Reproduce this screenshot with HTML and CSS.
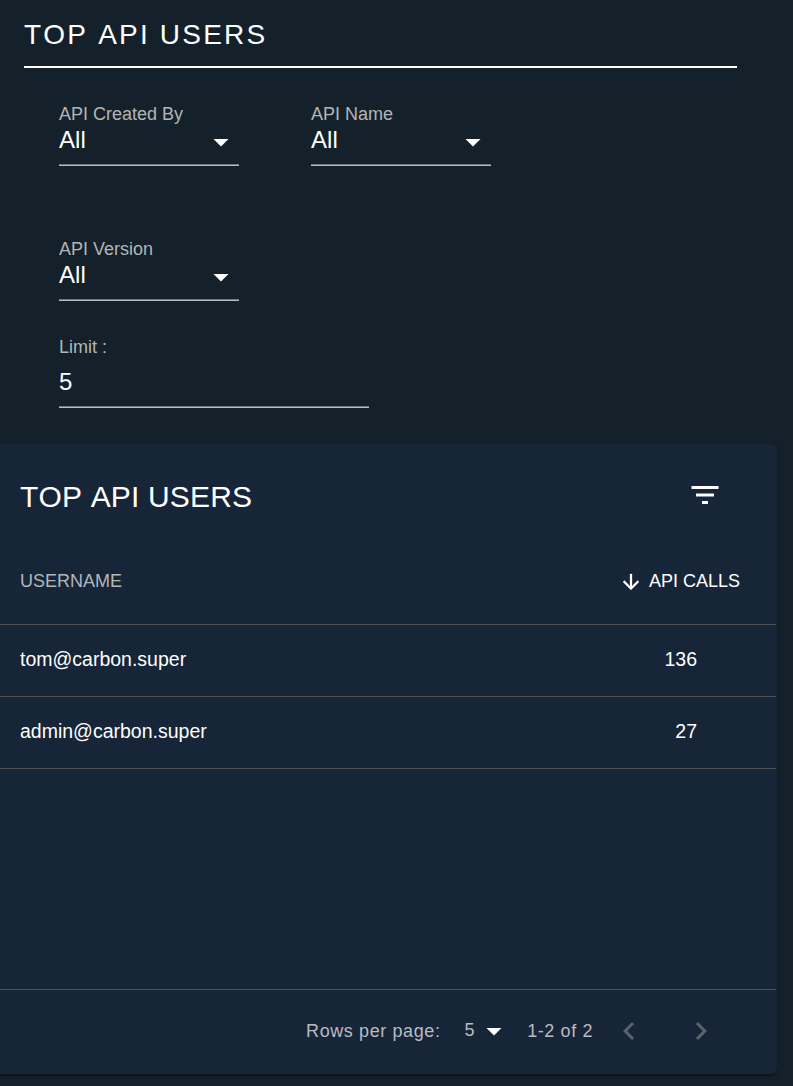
FILE: index.html
```html
<!DOCTYPE html>
<html lang="en">
<head>
<meta charset="utf-8">
<title>Top API Users</title>
<link rel="stylesheet" href="styles.css">
</head>
<body>
<header class="heading"><h1>TOP API USERS</h1></header>
<form class="filters">
  <div class="field select">
    <label>API Created By</label>
    <div class="control"><span>All</span><svg class="caret" viewBox="0 0 24 24"><path d="M7 10l5 5 5-5z"/></svg></div>
  </div>
  <div class="field select">
    <label>API Name</label>
    <div class="control"><span>All</span><svg class="caret" viewBox="0 0 24 24"><path d="M7 10l5 5 5-5z"/></svg></div>
  </div>
  <div class="field select">
    <label>API Version</label>
    <div class="control"><span>All</span><svg class="caret" viewBox="0 0 24 24"><path d="M7 10l5 5 5-5z"/></svg></div>
  </div>
  <div class="field limit">
    <label>Limit :</label>
    <div class="control"><span>5</span></div>
  </div>
</form>
<section class="card">
  <div class="toolbar">
    <h2>TOP API USERS</h2>
    <svg class="icon" viewBox="0 0 24 24"><path d="M10 18h4v-2h-4v2zM3 6v2h18V6H3zm3 7h12v-2H6v2z"/></svg>
  </div>
  <div class="row head">
    <span class="muted">USERNAME</span>
    <span class="sort"><svg viewBox="0 0 24 24"><path d="M20 12l-1.41-1.41L13 16.17V4h-2v12.17l-5.58-5.59L4 12l8 8 8-8z"/></svg>API CALLS</span>
  </div>
  <div class="row"><span>tom@carbon.super</span><span class="num">136</span></div>
  <div class="row"><span>admin@carbon.super</span><span class="num">27</span></div>
  <div class="row filler"></div>
  <div class="pager">
    <span>Rows per page:</span>
    <span class="size">5</span>
    <svg class="caret" viewBox="0 0 24 24"><path d="M7 10l5 5 5-5z"/></svg>
    <span class="range">1-2 of 2</span>
    <svg class="icon prev" viewBox="0 0 24 24"><path d="M15.41 7.41L14 6l-6 6 6 6 1.41-1.41L10.83 12z"/></svg>
    <svg class="icon" viewBox="0 0 24 24"><path d="M10 6L8.59 7.41 13.17 12l-4.58 4.59L10 18l6-6z"/></svg>
  </div>
</section>
</body>
</html>
```
FILE: styles.css
```css
* { box-sizing: border-box; }
body {
  margin: 0;
  height: 1086px;
  overflow: hidden;
  background: #14212a;
  color: #fff;
  font-family: "Liberation Sans", Arial, sans-serif;
}
svg { display: block; fill: currentColor; flex: none; }
h1, h2 { margin: 0; font-weight: 400; font-kerning: none; }

.heading {
  margin: 0 56px 0 24px;
  height: 68px;
  padding-top: 19px;
  border-bottom: 2px solid #fff;
}
h1 { font-size: 28px; line-height: 32px; letter-spacing: 2.2px; }

.filters {
  display: grid;
  grid-template-columns: 180px 180px;
  column-gap: 72px;
  padding: 36px 0 0 59px;
  height: 376px;
  grid-template-rows: 135px 98px auto;
}
.field label {
  display: block;
  font-size: 18px;
  line-height: 20px;
  color: #b3b6b7;
}
.control {
  display: flex;
  align-items: center;
  justify-content: space-between;
  height: 42px;
  padding-bottom: 10px;
  font-size: 24px;
  line-height: 28px;
  letter-spacing: .1px;
  border-bottom: 1px solid #b9bcbf;
  box-shadow: inset 0 -1px #71797e;
}
.caret { width: 36px; height: 36px; }
.select .caret { margin: 2px 0 -2px; }
.limit { grid-column: 1 / -1; width: 310px; }
.limit .control { height: 51px; padding-top: 10px; }

.card {
  display: flex;
  flex-direction: column;
  width: 777px;
  height: 630px;
  padding-right: 1px;
  background: #172538;
  border-radius: 0 6px 6px 0;
  box-shadow: 0 1.5px 4.5px rgba(0,0,0,.2), 0 1.5px 1.5px rgba(0,0,0,.14), 0 3px 1.5px -1.5px rgba(0,0,0,.12);
}
.toolbar {
  display: flex;
  align-items: center;
  justify-content: space-between;
  height: 96px;
  padding: 10px 53px 0 20px;
}
h2 { font-size: 30px; letter-spacing: .16px; }
.icon { width: 36px; height: 36px; }
.toolbar .icon { margin-top: -4px; }
.row {
  display: flex;
  align-items: center;
  justify-content: space-between;
  height: 72px;
  padding: 0 79px 2px 20px;
  border-bottom: 1px solid #515151;
  font-size: 19.5px;
}
.head { height: 85px; padding: 0 36px 2px 20px; font-size: 18px; }
.muted { color: #b3b6b7; }
.sort { display: flex; align-items: center; gap: 6px; }
.sort svg { width: 24px; height: 24px; margin: 1px 0 -1px; stroke: currentColor; stroke-width: .3; }
.filler { height: 221px; }
.pager {
  display: flex;
  align-items: center;
  justify-content: flex-end;
  height: 83px;
  padding-right: 57px;
  font-size: 18px;
  letter-spacing: .6px;
  color: #b8bcc1;
}
.size { margin: -2px 1px 0 24px; }
.pager svg { margin-top: -2px; }
.pager .caret { color: #fff; margin-right: 15px; }
.range { margin-right: 18px; }
.pager .icon { color: #596370; }
.pager .prev { margin-right: 36px; }
```
